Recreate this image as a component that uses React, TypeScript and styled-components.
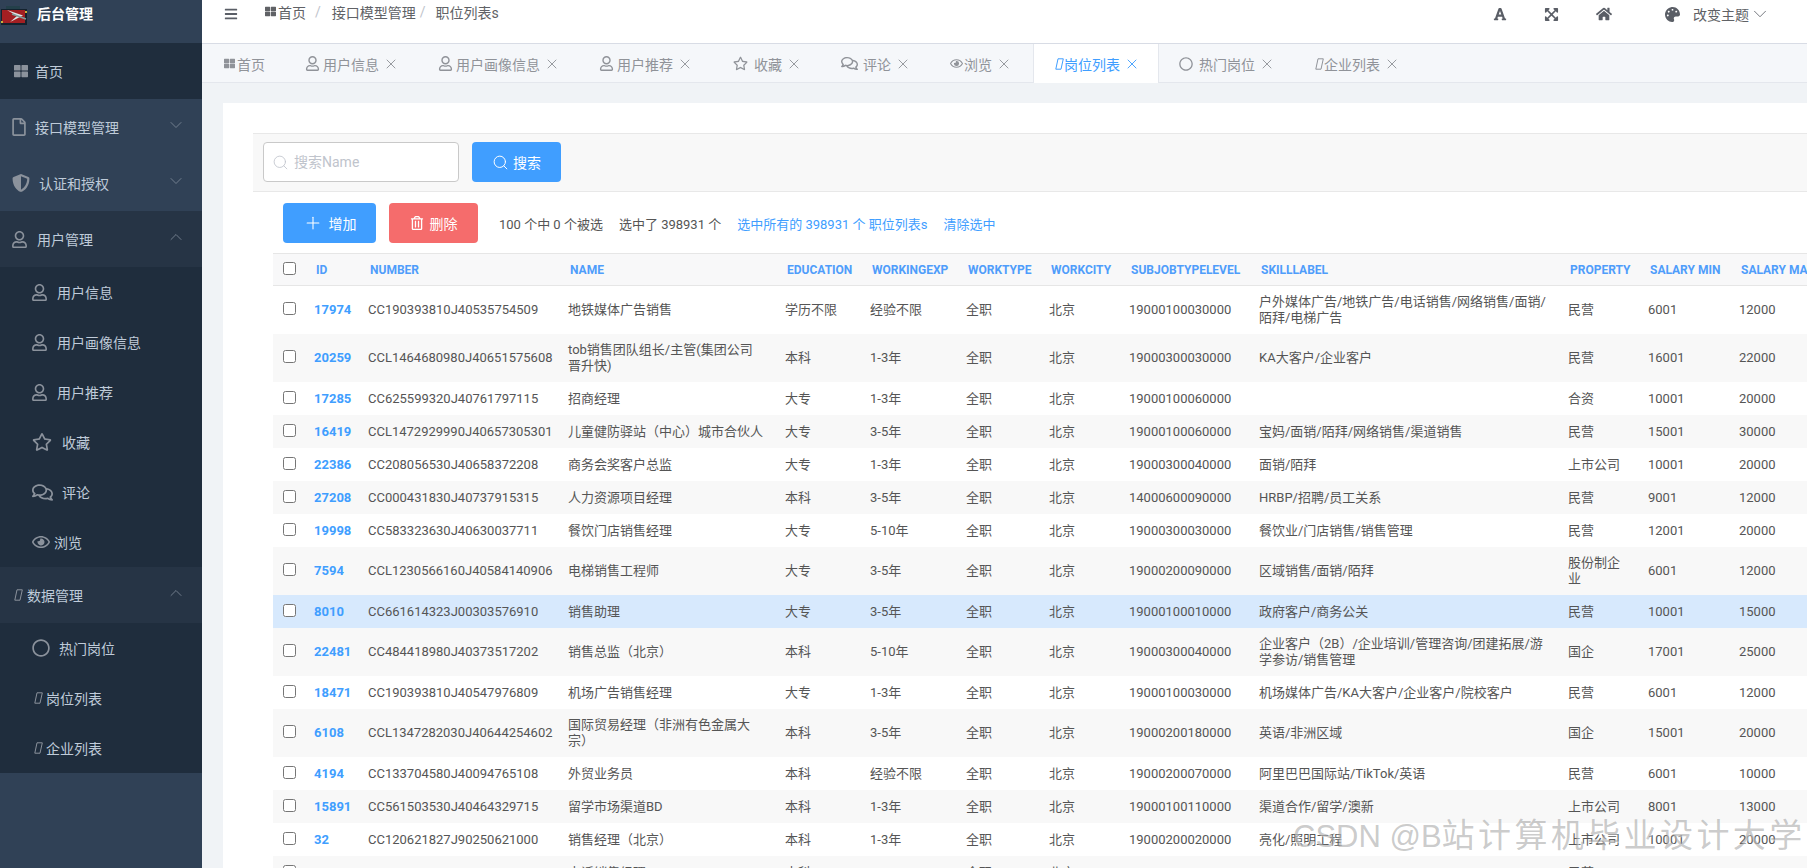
import React from 'react';
import styled, { createGlobalStyle } from 'styled-components';
import {
  FaBars, FaExpandArrowsAlt, FaFont, FaHome, FaPalette, FaRegCircle, FaRegComments, FaRegEye,
  FaRegFile, FaRegStar, FaRegTrashAlt, FaRegUser, FaShieldAlt, FaThLarge,
} from 'react-icons/fa';
import { ChevronDown, ChevronUp, Plus, Search, X } from 'lucide-react';

const Global = createGlobalStyle`
  html, body { margin: 0; padding: 0; height: 100%; overflow: hidden; }
  body { font-family: Roboto, "Noto Sans CJK SC", sans-serif; font-size: 14px; color: #606266; }
  * { box-sizing: border-box; }
`;

const Page = styled.div`
  position: relative;
  display: flex;
  width: 1807px;
  height: 868px;
  overflow: hidden;
`;

/* ---------- sidebar ---------- */
const Sidebar = styled.aside`
  flex: 0 0 202px;
  background: #304156;
  display: flex;
  flex-direction: column;
`;
const Brand = styled.div`
  height: 43px;
  display: flex;
  align-items: flex-start;
  padding: 6px 0 0 1px;
  gap: 9px;
  color: #fff;
  font-weight: 700;
  font-size: 14px;
  line-height: 16px;
`;
const BrandTitle = styled.span`
  margin-top: 0;
`;
const MenuRow = styled.div<{ $tone: 'dark' | 'base' | 'open'; $pl: number; $h: number }>`
  height: ${p => p.$h}px;
  padding-left: ${p => p.$pl}px;
  padding-right: 16px;
  display: flex;
  align-items: center;
  font-size: 14px;
  color: #bfcbd9;
  background: ${p => (p.$tone === 'dark' ? '#1f2d3d' : p.$tone === 'open' ? '#263445' : '#304156')};
`;
const MenuIcon = styled.span<{ $gap: number; $size: number }>`
  display: inline-flex;
  align-items: center;
  color: #8b929c;
  font-size: ${p => p.$size}px;
  margin-right: ${p => p.$gap}px;
`;
const Caret = styled.span`
  margin-left: auto;
  display: inline-flex;
  margin-bottom: 5px;
  color: #7e8a99;
`;

/* ---------- main ---------- */
const Main = styled.main`
  flex: 1;
  min-width: 0;
  display: flex;
  flex-direction: column;
  background: #f0f3f6;
`;
const Topbar = styled.header`
  flex: 0 0 44px;
  background: #fff;
  border-bottom: 1px solid #d8dce5;
  display: flex;
  align-items: flex-start;
  padding: 0 36px 0 22px;
  color: #5a5e66;
`;
const Burger = styled.span`
  display: inline-flex;
  height: 28px;
  align-items: center;
  font-size: 14px;
  margin-right: 27px;
  color: #5a5e66;
`;
const Crumbs = styled.nav`
  display: flex;
  align-items: center;
  height: 23px;
  font-size: 14px;
  color: #606266;
`;
const CrumbIcon = styled.span`
  display: inline-flex;
  font-size: 11px;
  margin-right: 2px;
`;
const CrumbSep = styled.span<{ $l: number; $r: number }>`
  color: #c0c4cc;
  margin: 0 ${p => p.$r}px 0 ${p => p.$l}px;
`;
const TopTools = styled.div`
  margin-left: auto;
  height: 28px;
  display: flex;
  align-items: center;
  color: #5a5e66;
`;
const ToolIcon = styled.span<{ $gap: number; $size: number }>`
  display: inline-flex;
  font-size: ${p => p.$size}px;
  margin-right: ${p => p.$gap}px;
`;
const ThemeLabel = styled.span`
  font-size: 14px;
  color: #606266;
`;

const TabStrip = styled.div`
  flex: 0 0 39px;
  min-height: 0;
  display: flex;
  padding-left: 2px;
  background: #f5f7fa;
  border-bottom: 1px solid #e4e7ed;
  font-size: 14px;
  color: #909399;
`;
const Tab = styled.div<{ $active?: boolean; $pl: number; $pr: number }>`
  display: flex;
  align-items: center;
  height: 39px;
  padding: 0 ${p => p.$pr}px 0 ${p => p.$pl}px;
  margin-left: ${p => (p.$active ? '2px' : '0')};
  border-left: ${p => (p.$active ? '1px solid #e4e7ed' : '0')};
  border-right: ${p => (p.$active ? '1px solid #e4e7ed' : '0')};
  background: ${p => (p.$active ? '#fff' : 'transparent')};
  color: ${p => (p.$active ? '#409eff' : '#909399')};
`;
const TabIcon = styled.span<{ $gap: number; $size: number }>`
  display: inline-flex;
  font-size: ${p => p.$size}px;
  margin-right: ${p => p.$gap}px;
`;
const TabClose = styled.span`
  display: inline-flex;
  justify-content: center;
  width: 14px;
  margin-left: 5px;
  & > svg { flex-shrink: 0; }
`;

const Body = styled.div`
  flex: 1;
  min-height: 0;
  padding: 20px 0 0 21px;
`;
const Card = styled.section`
  height: 100%;
  background: #fff;
  overflow: hidden;
  padding: 30px 0 0 30px;
`;
const SearchBar = styled.div`
  height: 59px;
  display: flex;
  align-items: center;
  gap: 13px;
  padding: 0 0 1px 10px;
  background: #f8f8f8;
  border-top: 1px solid #e8e8e8;
  border-bottom: 1px solid #e8e8e8;
`;
const SearchField = styled.label`
  width: 196px;
  height: 40px;
  background: #fff;
  border: 1px solid #c9c9c9;
  border-radius: 4px;
  display: flex;
  align-items: center;
  gap: 5px;
  padding-left: 8px;
  color: #c0c4cc;
`;
const SearchInput = styled.input`
  border: 0;
  outline: 0;
  padding: 0;
  flex: 1;
  min-width: 0;
  font: 14px Roboto, "Noto Sans CJK SC", sans-serif;
  background: transparent;
  &::placeholder { color: #c0c4cc; opacity: 1; }
`;
const Btn = styled.button<{ $w: number; $bg: string; $gap: number }>`
  width: ${p => p.$w}px;
  height: 40px;
  border: 0;
  border-radius: 4px;
  background: ${p => p.$bg};
  color: #fff;
  font: 14px Roboto, "Noto Sans CJK SC", sans-serif;
  display: inline-flex;
  align-items: center;
  justify-content: center;
  gap: ${p => p.$gap}px;
  padding: 0;
`;
const Actions = styled.div`
  display: flex;
  align-items: center;
  height: 40px;
  margin: 11px 0 10px 30px;
  font-size: 13px;
  color: #666;
`;
const ActionBtns = styled.div`
  display: flex;
  gap: 13px;
  margin-right: 21px;
`;
const Note = styled.span<{ $gap: number; $link?: boolean }>`
  margin-right: ${p => p.$gap}px;
  color: ${p => (p.$link ? '#409eff' : '#555')};
`;

const TableWrap = styled.div`
  margin-left: 20px;
`;
const Grid = styled.table`
  border-collapse: collapse;
  table-layout: fixed;
  width: 1556px;
`;
const HeadRow = styled.tr`
  height: 32px;
  background: #f8f8f9;
  border-top: 1px solid #e6e6e6;
  border-bottom: 1px solid #e6e6e6;
`;
const Th = styled.th<{ $w: number }>`
  width: ${p => p.$w}px;
  padding: 0 0 0 12px;
  text-align: left;
  font-size: 12px;
  font-weight: 700;
  line-height: 16px;
  color: #4f9dfb;
  text-transform: uppercase;
  white-space: nowrap;
  overflow: hidden;
`;
const CheckTh = styled.th<{ $w: number }>`
  width: ${p => p.$w}px;
  padding: 0 0 0 10px;
`;
const Row = styled.tr<{ $striped: boolean; $hover: boolean }>`
  height: 33px;
  background: ${p => (p.$hover ? '#d7e9fd' : p.$striped ? '#f8f8f8' : '#fff')};
`;
const Td = styled.td`
  padding: 8px 10px;
  font-size: 13px;
  line-height: 16px;
  color: #555;
  vertical-align: middle;
`;
const CheckTd = styled.td`
  padding: 0 0 0 10px;
  vertical-align: middle;
`;
const Check = styled.input`
  display: block;
  width: 13px;
  height: 13px;
  margin: 0 0 3px;
`;
const IdLink = styled.a`
  color: #409eff;
  font-weight: 700;
`;
const Watermark = styled.div`
  position: absolute;
  left: 1293px;
  top: 817px;
  font: 31px/38px "Liberation Sans", "Noto Sans CJK SC", sans-serif;
  color: rgba(130, 130, 130, 0.42);
  text-shadow: 1px 1px 1px rgba(255, 255, 255, 0.5);
  white-space: nowrap;
  pointer-events: none;
`;
const WatermarkCjk = styled.span`
  font-size: 33px;
  letter-spacing: 3.4px;
`;

const Logo = () => (
  <svg width="27" height="20" viewBox="0 0 27 20">
    <rect x="0" y="3" width="26" height="16" fill="#14222e" />
    <rect x="5" y="0" width="14" height="3" fill="#24404a" />
    <rect x="1" y="4" width="23" height="13" fill="#a31f22" />
    <path d="M6 4 L22 9.5 L9 16 L16 10 Z" fill="#dfe6e4" />
    <path d="M11 8 L25 13" stroke="#7f9c9a" strokeWidth="1.5" />
    <rect x="0" y="15" width="2" height="2" fill="#c9b23a" />
    <rect x="24" y="5" width="2" height="2" fill="#c9b23a" />
  </svg>
);

const Tofu = ({ w = 9, h = 12 }: { w?: number; h?: number }) => (
  <svg width={w} height={h} viewBox="0 0 9 12" fill="none" stroke="currentColor" strokeWidth="1">
    <path d="M3 .8 H8.3 L6 11.2 H.8 Z" />
  </svg>
);

type Col = { key: string; w: number };
const columns: Col[] = [
  { key: 'ID', w: 54 }, { key: 'number', w: 200 }, { key: 'name', w: 217 }, { key: 'education', w: 85 },
  { key: 'workingexp', w: 96 }, { key: 'worktype', w: 83 }, { key: 'workcity', w: 80 },
  { key: 'subjobtypelevel', w: 130 }, { key: 'skilllabel', w: 309 }, { key: 'property', w: 80 },
  { key: 'salary min', w: 91 }, { key: 'salary max', w: 100 },
];

const rows: string[][] = [
  ['17974','CC190393810J40535754509','地铁媒体广告销售','学历不限','经验不限','19000100030000','户外媒体广告/地铁广告/电话销售/网络销售/面销/陌拜/电梯广告','民营','6001','12000'],
  ['20259','CCL1464680980J40651575608','tob销售团队组长/主管(集团公司晋升快)','本科','1-3年','19000300030000','KA大客户/企业客户','民营','16001','22000'],
  ['17285','CC625599320J40761797115','招商经理','大专','1-3年','19000100060000','','合资','10001','20000'],
  ['16419','CCL1472929990J40657305301','儿童健防驿站（中心）城市合伙人','大专','3-5年','19000100060000','宝妈/面销/陌拜/网络销售/渠道销售','民营','15001','30000'],
  ['22386','CC208056530J40658372208','商务会奖客户总监','大专','1-3年','19000300040000','面销/陌拜','上市公司','10001','20000'],
  ['27208','CC000431830J40737915315','人力资源项目经理','本科','3-5年','14000600090000','HRBP/招聘/员工关系','民营','9001','12000'],
  ['19998','CC583323630J40630037711','餐饮门店销售经理','大专','5-10年','19000300030000','餐饮业/门店销售/销售管理','民营','12001','20000'],
  ['7594','CCL1230566160J40584140906','电梯销售工程师','大专','3-5年','19000200090000','区域销售/面销/陌拜','股份制企业','6001','12000'],
  ['8010','CC661614323J00303576910','销售助理','大专','3-5年','19000100010000','政府客户/商务公关','民营','10001','15000'],
  ['22481','CC484418980J40373517202','销售总监（北京）','本科','5-10年','19000300040000','企业客户（2B）/企业培训/管理咨询/团建拓展/游学参访/销售管理','国企','17001','25000'],
  ['18471','CC190393810J40547976809','机场广告销售经理','大专','1-3年','19000100030000','机场媒体广告/KA大客户/企业客户/院校客户','民营','6001','12000'],
  ['6108','CCL1347282030J40644254602','国际贸易经理（非洲有色金属大宗）','本科','3-5年','19000200180000','英语/非洲区域','国企','15001','20000'],
  ['4194','CC133704580J40094765108','外贸业务员','本科','经验不限','19000200070000','阿里巴巴国际站/TikTok/英语','民营','6001','10000'],
  ['15891','CC561503530J40464329715','留学市场渠道BD','本科','1-3年','19000100110000','渠道合作/留学/澳新','上市公司','8001','13000'],
  ['32','CC120621827J90250621000','销售经理（北京）','本科','1-3年','19000200020000','亮化/照明工程','上市公司','10001','20000'],
  ['','','电话销售经理','本科','','','','民营','',''],
];

const closeX = <TabClose><X size={16} strokeWidth={1.4} /></TabClose>;

type TabDef = { icon: React.ReactNode; gap: number; size: number; label: string; close: boolean; active?: boolean; pl?: number; pr?: number };
const tabs: TabDef[] = [
  { icon: <FaThLarge />, gap: 2, size: 11, label: '首页', close: false },
  { icon: <FaRegUser />, gap: 3, size: 15, label: '用户信息', close: true },
  { icon: <FaRegUser />, gap: 3, size: 15, label: '用户画像信息', close: true },
  { icon: <FaRegUser />, gap: 3, size: 15, label: '用户推荐', close: true },
  { icon: <FaRegStar />, gap: 6, size: 15, label: '收藏', close: true, pl: 21 },
  { icon: <FaRegComments />, gap: 5, size: 17, label: '评论', close: true },
  { icon: <FaRegEye />, gap: 1, size: 13, label: '浏览', close: true },
  { icon: <Tofu />, gap: 0, size: 12, label: '岗位列表', close: true, active: true, pl: 21, pr: 19 },
  { icon: <FaRegCircle />, gap: 6, size: 14, label: '热门岗位', close: true },
  { icon: <Tofu />, gap: 0, size: 12, label: '企业列表', close: true, pl: 21 },
];

export default function App() {
  return (
    <Page>
      <Global />
      <Sidebar>
        <Brand><Logo /><BrandTitle>后台管理</BrandTitle></Brand>
        <MenuRow $tone="dark" $pl={14} $h={56}><MenuIcon $gap={7} $size={14}><FaThLarge /></MenuIcon>首页</MenuRow>
        <MenuRow $tone="base" $pl={10} $h={56}>
          <MenuIcon $gap={7} $size={18}><FaRegFile /></MenuIcon>接口模型管理<Caret><ChevronDown size={20} strokeWidth={1} /></Caret>
        </MenuRow>
        <MenuRow $tone="base" $pl={12} $h={56}>
          <MenuIcon $gap={9} $size={18}><FaShieldAlt /></MenuIcon>认证和授权<Caret><ChevronDown size={20} strokeWidth={1} /></Caret>
        </MenuRow>
        <MenuRow $tone="open" $pl={11} $h={56}>
          <MenuIcon $gap={9} $size={17}><FaRegUser /></MenuIcon>用户管理<Caret><ChevronUp size={20} strokeWidth={1} /></Caret>
        </MenuRow>
        <MenuRow $tone="dark" $pl={31} $h={50}><MenuIcon $gap={9} $size={17}><FaRegUser /></MenuIcon>用户信息</MenuRow>
        <MenuRow $tone="dark" $pl={31} $h={50}><MenuIcon $gap={9} $size={17}><FaRegUser /></MenuIcon>用户画像信息</MenuRow>
        <MenuRow $tone="dark" $pl={31} $h={50}><MenuIcon $gap={9} $size={17}><FaRegUser /></MenuIcon>用户推荐</MenuRow>
        <MenuRow $tone="dark" $pl={32} $h={50}><MenuIcon $gap={10} $size={20}><FaRegStar /></MenuIcon>收藏</MenuRow>
        <MenuRow $tone="dark" $pl={32} $h={50}><MenuIcon $gap={9} $size={21}><FaRegComments /></MenuIcon>评论</MenuRow>
        <MenuRow $tone="dark" $pl={32} $h={50}><MenuIcon $gap={4} $size={18}><FaRegEye /></MenuIcon>浏览</MenuRow>
        <MenuRow $tone="open" $pl={14} $h={56}>
          <MenuIcon $gap={4} $size={12}><Tofu /></MenuIcon>数据管理<Caret><ChevronUp size={20} strokeWidth={1} /></Caret>
        </MenuRow>
        <MenuRow $tone="dark" $pl={32} $h={50}><MenuIcon $gap={9} $size={18}><FaRegCircle /></MenuIcon>热门岗位</MenuRow>
        <MenuRow $tone="dark" $pl={34} $h={50}><MenuIcon $gap={3} $size={12}><Tofu /></MenuIcon>岗位列表</MenuRow>
        <MenuRow $tone="dark" $pl={34} $h={50}><MenuIcon $gap={3} $size={12}><Tofu /></MenuIcon>企业列表</MenuRow>
      </Sidebar>

      <Main>
        <Topbar>
          <Burger><FaBars /></Burger>
          <Crumbs>
            <CrumbIcon><FaThLarge /></CrumbIcon>首页
            <CrumbSep $l={9} $r={11}>/</CrumbSep>接口模型管理
            <CrumbSep $l={4} $r={10}>/</CrumbSep>职位列表s
          </Crumbs>
          <TopTools>
            <ToolIcon $gap={37} $size={14}><FaFont /></ToolIcon>
            <ToolIcon $gap={37} $size={15}><FaExpandArrowsAlt /></ToolIcon>
            <ToolIcon $gap={53} $size={16}><FaHome /></ToolIcon>
            <ToolIcon $gap={13} $size={15}><FaPalette /></ToolIcon>
            <ThemeLabel>改变主题</ThemeLabel>
            <ChevronDown size={22} strokeWidth={0.9} />
          </TopTools>
        </Topbar>

        <TabStrip>
          {tabs.map(t => (
            <Tab key={t.label} $active={t.active} $pl={t.pl ?? 20} $pr={t.pr ?? 20}>
              <TabIcon $gap={t.gap} $size={t.size}>{t.icon}</TabIcon>
              {t.label}
              {t.close && closeX}
            </Tab>
          ))}
        </TabStrip>

        <Body>
          <Card>
            <SearchBar>
              <SearchField>
                <Search size={17} strokeWidth={1.2} />
                <SearchInput placeholder="搜索Name" />
              </SearchField>
              <Btn $w={89} $bg="#409eff" $gap={4}><Search size={17} strokeWidth={1.4} />搜索</Btn>
            </SearchBar>

            <Actions>
              <ActionBtns>
                <Btn $w={93} $bg="#409eff" $gap={6}><Plus size={20} strokeWidth={1.3} />增加</Btn>
                <Btn $w={89} $bg="#f56c6c" $gap={6}><FaRegTrashAlt size={14} />删除</Btn>
              </ActionBtns>
              <Note $gap={16}>100 个中 0 个被选</Note>
              <Note $gap={16}>选中了 398931 个</Note>
              <Note $gap={16} $link>选中所有的 398931 个 职位列表s</Note>
              <Note $gap={0} $link>清除选中</Note>
            </Actions>

            <TableWrap>
              <Grid>
                <thead>
                  <HeadRow>
                    <CheckTh $w={31}><Check type="checkbox" readOnly /></CheckTh>
                    {columns.map(c => <Th key={c.key} $w={c.w}>{c.key}</Th>)}
                  </HeadRow>
                </thead>
                <tbody>
                  {rows.map((r, i) => (
                    <Row key={i} $striped={i % 2 === 1} $hover={i === 8}>
                      <CheckTd><Check type="checkbox" readOnly /></CheckTd>
                      <Td><IdLink>{r[0]}</IdLink></Td>
                      <Td>{r[1]}</Td>
                      <Td>{r[2]}</Td>
                      <Td>{r[3]}</Td>
                      <Td>{r[4]}</Td>
                      <Td>全职</Td>
                      <Td>北京</Td>
                      <Td>{r[5]}</Td>
                      <Td>{r[6]}</Td>
                      <Td>{r[7]}</Td>
                      <Td>{r[8]}</Td>
                      <Td>{r[9]}</Td>
                    </Row>
                  ))}
                </tbody>
              </Grid>
            </TableWrap>
          </Card>
        </Body>
      </Main>
      <Watermark>CSDN @B<WatermarkCjk>站计算机毕业设计大学</WatermarkCjk></Watermark>
    </Page>
  );
}
